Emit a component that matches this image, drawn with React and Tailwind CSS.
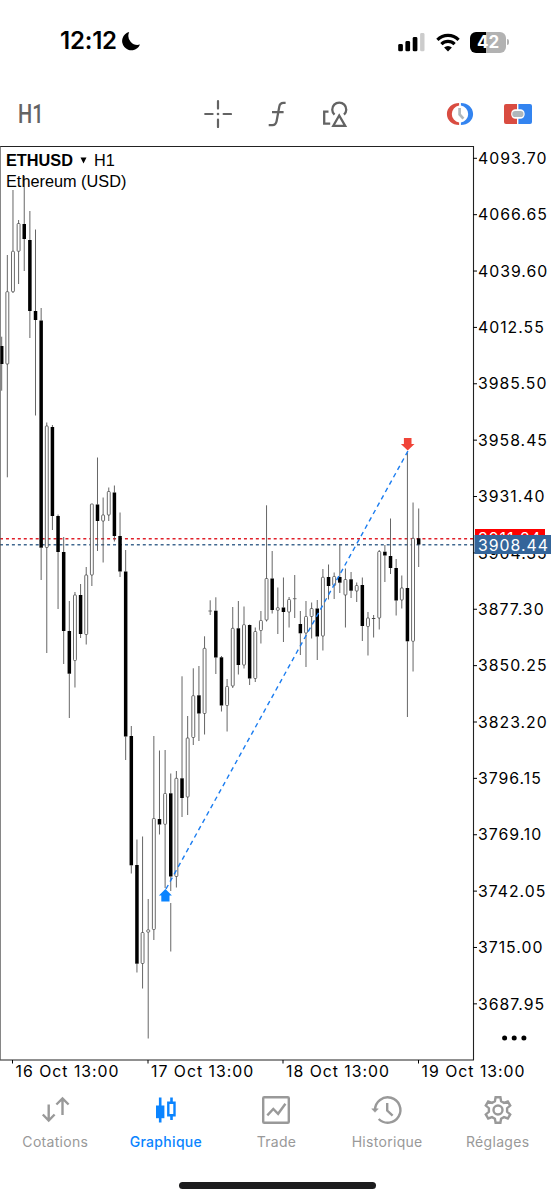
import React from 'react';

// [high, body top, body bottom, low, kind] in chart units, oldest first
// kind: 1 = bearish (filled), 0 = bullish (hollow), 2 = doji
const CANDLES = [
  [336.7, 346, 364, 390.7, 1],
  [255, 291.7, 364, 477.3, 0],
  [190, 251.3, 291.7, 293, 0],
  [220, 223.5, 251.3, 284, 0],
  [176, 224, 239, 271, 1],
  [211, 240, 311, 338, 1],
  [229.5, 311, 320, 415.5, 1],
  [308, 320.5, 547.7, 580, 1],
  [422.5, 426, 547.5, 653, 0],
  [425, 427, 516, 530, 1],
  [514.5, 516, 552, 609, 1],
  [537, 552, 631, 664, 1],
  [601, 631, 673.7, 718, 1],
  [592, 595, 660.5, 687.5, 0],
  [584, 595, 634, 638, 1],
  [567, 575, 634.5, 644.5, 0],
  [504, 504, 575, 586, 0],
  [457.5, 504.5, 521, 551, 1],
  [497.5, 515, 521, 562.5, 0],
  [487.5, 491.5, 515, 521, 0],
  [485.5, 492.5, 536, 541.5, 1],
  [512.5, 536, 571.5, 577, 1],
  [550, 571.5, 736.5, 760, 1],
  [726, 736, 865.3, 873.5, 1],
  [839.5, 865, 963.7, 972.5, 1],
  [836.5, 932.5, 963.5, 988.5, 0],
  [899, 929.8, 932.2, 1038.5, 0],
  [736, 818.5, 929.5, 940, 0],
  [750.5, 819, 824.5, 834.5, 1],
  [750, 793.5, 824.3, 888, 0],
  [773.5, 793.3, 876.5, 951.5, 1],
  [771, 778.3, 876.5, 887.5, 0],
  [676.3, 778.3, 798, 817, 1],
  [716, 738, 797, 815, 0],
  [668.3, 695.7, 737.5, 745, 0],
  [666, 695.3, 713.5, 741, 1],
  [636.3, 648.3, 713.5, 734.5, 0],
  [600.3, 611, 611, 615, 2],
  [597.3, 610.7, 657.5, 674, 1],
  [656, 657.3, 705.5, 711.5, 1],
  [679, 686.5, 705.5, 731.5, 0],
  [607, 628.3, 686, 688, 0],
  [601, 628.3, 665, 674.5, 1],
  [606.5, 624.7, 665, 668.5, 0],
  [624.5, 625, 678.5, 685, 1],
  [627.5, 631.5, 678.5, 682, 0],
  [611, 620.5, 630.5, 643.5, 0],
  [505.3, 578.5, 620, 621.5, 0],
  [551, 578.5, 610, 613.5, 1],
  [587.5, 607.7, 610.3, 634, 0],
  [577.5, 607.5, 612, 642, 1],
  [597, 599.5, 612, 627.5, 0],
  [575, 598.7, 598.7, 618, 2],
  [611, 624, 633.3, 655, 1],
  [601, 616.5, 633, 667, 0],
  [602.5, 608.5, 616.5, 638.5, 0],
  [600, 608.5, 636.5, 660, 1],
  [569, 577.3, 636, 650.5, 0],
  [564.5, 577, 586, 599.5, 1],
  [572.5, 576.5, 585.5, 599, 0],
  [544.5, 577, 582.7, 593, 1],
  [568.5, 579.5, 595, 627.5, 0],
  [572, 579.3, 590.7, 598, 1],
  [582.5, 585.5, 591, 602, 0],
  [577.5, 585, 626, 641, 1],
  [612, 618, 626.5, 655.5, 0],
  [615, 618, 618.7, 637.5, 1],
  [550, 551.5, 618, 629.5, 0],
  [545, 551.7, 555.5, 582, 1],
  [518.5, 556, 568, 574, 1],
  [559, 568, 600.5, 615.5, 1],
  [575.5, 588, 600, 608.5, 0],
  [453, 588, 641.3, 717, 1],
  [502.5, 538.3, 641.3, 671.5, 0],
  [508.5, 538.3, 544.5, 567, 1],
];

const PRICES = Array.from({ length: 16 }, (_, i) => (4093.7 - 27.05 * i).toFixed(2));

const DATES = [
  { x: 12.5, label: '16 Oct 13:00' },
  { x: 148, label: '17 Oct 13:00' },
  { x: 283, label: '18 Oct 13:00' },
  { x: 418.5, label: '19 Oct 13:00' },
];

function Candle({ index, data }) {
  const [high, top, bottom, low, kind] = data;
  const x = 1.7 + index * 5.635;

  return (
    <g>
      <line x1={x} x2={x} y1={high} y2={top} stroke="#555" strokeWidth="0.9" />
      <line x1={x} x2={x} y1={bottom} y2={low} stroke="#555" strokeWidth="0.9" />
      {kind === 1 && (
        <rect x={x - 1.75} y={top} width="3.5" height={bottom - top} fill="#000" />
      )}
      {kind === 0 && (
        <rect
          x={x - 1.45}
          y={top}
          width="2.9"
          height={bottom - top}
          rx="0.8"
          fill="#fff"
          stroke="#444"
          strokeWidth="0.8"
        />
      )}
      {kind === 2 && (
        <line x1={x - 1.8} x2={x + 1.8} y1={top} y2={top} stroke="#555" strokeWidth="0.8" />
      )}
    </g>
  );
}

function StatusBar() {
  return (
    <div className="flex h-[82px] items-center justify-between pl-[60px] pr-[45px]">
      <div className="flex items-center gap-[5px]">
        <span className="text-[24px] font-semibold leading-none tracking-[-0.2px]">12:12</span>
        <svg width="19" height="20" viewBox="0 0 19 20">
          <path d="M7.2 1A9.3 9.3 0 1 0 18 13.6 9.2 9.2 0 0 1 7.2 1Z" fill="#000" />
        </svg>
      </div>
      <div className="flex items-center pt-[2px]">
        <svg width="27" height="19" viewBox="0 0 27 19">
          <rect x="0.2" y="11" width="4.7" height="7.3" rx="1.4" />
          <rect x="7.4" y="8" width="4.7" height="10.3" rx="1.4" />
          <rect x="14.7" y="4" width="4.7" height="14.3" rx="1.4" />
          <rect x="22.1" y="0" width="4.4" height="18.3" rx="1.4" fill="#ccc" />
        </svg>
        <svg className="ml-[11px]" width="24" height="19" viewBox="0 0 24 19" fill="none" stroke="#000">
          <path d="M1.4 6.8a15 15 0 0 1 21.200 0" strokeWidth="3.2" />
          <path d="M5.4 11.2a9.300 9.300 0 0 1 13.200 0" strokeWidth="3.2" />
          <path d="M12 18.6 8.1 14.500a5.600 5.600 0 0 1 7.800 0Z" fill="#000" stroke="none" />
        </svg>
        <div className="ml-[10px] flex h-[21px] w-[36px] items-center justify-center rounded-[6px] bg-linear-to-r from-black from-44% to-[#b2b2b2] to-44% text-[17px] font-bold leading-none text-white">
          42
        </div>
        <div className="ml-[1px] h-[6px] w-[2px] rounded-r-full bg-[#b2b2b2]" />
      </div>
    </div>
  );
}

function Toolbar() {
  return (
    <div className="flex h-16 items-center text-[#636363]">
      <span className="ml-[18px] w-[186px] font-[Roboto] text-[25px] font-medium leading-none">
        <span className="inline-block origin-left scale-x-[0.8]">H1</span>
      </span>
      <svg width="28" height="28" viewBox="0 0 28 28" stroke="currentColor" strokeWidth="2.2" strokeLinecap="round">
        <path d="M14 1.2v7.4M14 19.6V27M1.2 14h7.4M19.6 14H27" />
        <circle cx="14" cy="14" r="1.3" fill="currentColor" stroke="none" />
      </svg>
      <svg className="ml-[36px]" width="18" height="26" viewBox="0 0 18 26" fill="none" stroke="currentColor" strokeWidth="2.3">
        <path d="M17.600 1.900h-2.200c-2.500 0-3.700 1.400-4.100 3.700L8.600 20.100c-.5 2.700-1.800 4-4.200 4H.7M4 11.200h11.600" />
      </svg>
      <svg className="ml-[36px]" width="26" height="28" viewBox="0 0 26 28" fill="none" stroke="currentColor" strokeWidth="2.3">
        <path d="M6.500 11.600H2.200v12h6" />
        <path d="M12.500 14.700A7 7 0 1 1 22 14.700" />
        <path d="M17.200 15.500 11.300 25.800h11.900Z" />
      </svg>
      <svg className="ml-[98px]" width="28" height="24" viewBox="0 0 28 24" fill="none">
        <path d="M13.1 1C6.4 1 .9 5.5.9 12s5.500 11 12.200 11v-2.500a8.600 8.600 0 0 1 0-17Z" fill="#d94c41" />
        <path d="M14.900 1C21.600 1 27.100 5.500 27.100 12s-5.500 11-12.200 11v-2.500a8.600 8.600 0 0 0 0-17Z" fill="#3384f0" />
        <path d="M13.600 6v6.500l3.800 4.200" stroke="#b0b8bc" strokeWidth="2.700" />
      </svg>
      <svg className="ml-[29px]" width="30" height="22" viewBox="0 0 30 22">
        <path d="M3 1h11v20H3a2 2 0 0 1-2-2V3a2 2 0 0 1 2-2Z" fill="#d94c41" />
        <path d="M15.400 1H27a2 2 0 0 1 2 2v16a2 2 0 0 1-2 2H15.400Z" fill="#3384f0" />
        <rect x="8.200" y="6.300" width="13.400" height="9.400" rx="4.200" fill="#fff" />
        <rect x="9.300" y="8" width="11.200" height="6" rx="2.800" fill="#b0b8bc" />
      </svg>
    </div>
  );
}

function Chart() {
  return (
    <div className="relative h-[938px]">
      <svg
        width="554"
        height="938"
        viewBox="0 146 554 938"
        className="block font-[Inter,sans-serif] text-[15.8px] tracking-[1px]"
      >
        {/* Bid and ask lines */}
        <path d="M0 538.700H473" stroke="#e0202a" strokeWidth="1.500" strokeDasharray="3 2.950" />
        <path d="M0 544.800H473" stroke="#41688f" strokeWidth="1.500" strokeDasharray="3 2.950" />

        {CANDLES.map((c, i) => (
          <Candle key={i} index={i} data={c} />
        ))}

        {/* Closed position */}
        <rect x="158" y="891" width="15" height="12" fill="#fff" />
        <path d="M166 889 408 451" stroke="#1a7cf0" strokeWidth="1.400" strokeDasharray="4.600 3.800" />
        <path d="M165.400 889l6.500 6.500h-2.400v6h-8.200v-6h-2.400Z" fill="#0a84ff" />
        <path d="M407.700 450.500l6.800-6.500h-3v-6h-7.600v6h-3Z" fill="#f04438" />

        {/* Frame */}
        <path d="M0 146.500H473.500V1060H0" fill="none" stroke="#222" strokeWidth="1.100" />
        <path d="M0.400 146V1060" stroke="#555" strokeWidth="0.800" />

        {PRICES.map((price, i) => (
          <g key={price}>
            <path d={`M473 ${158.3 + i * 56.37}h4`} stroke="#000" />
            <text x="478" y={164 + i * 56.37}>{price}</text>
          </g>
        ))}
        {DATES.map((d) => (
          <g key={d.label}>
            <path d={`M${d.x} 1060v3.5`} stroke="#000" />
            <text x={d.x + 3} y="1077">{d.label}</text>
          </g>
        ))}

        <rect x="475" y="529" width="70" height="20" fill="#f00" />
        <text x="478" y="544" fill="#fff">3911.24</text>
        <rect x="474.500" y="535" width="76.500" height="19" fill="#34659a" />
        <text x="478" y="550.500" fill="#fff">3908.44</text>

        <g>
          <circle cx="504.600" cy="1038" r="2.500" />
          <circle cx="514.200" cy="1038" r="2.500" />
          <circle cx="523.900" cy="1038" r="2.500" />
        </g>
      </svg>
      <div className="absolute left-[6px] top-[4px] font-['Liberation_Sans',sans-serif] text-[16.3px] leading-[21px]">
        <div className="flex items-center">
          <b>ETHUSD</b>
          <svg className="mx-[7px]" width="7" height="7" viewBox="0 0 7 7">
            <path d="M0.500 0.500h6L3.500 6.500Z" />
          </svg>
          <span>H1</span>
        </div>
        <div>Ethereum (USD)</div>
      </div>
    </div>
  );
}

const TABS = [
  {
    label: 'Cotations',
    icon: <path d="M8.700 9.500v16M2.800 19.500l5.900 6 5.900-6M22.500 20V3.500M16.400 9.500l6.100-6 6.100 6" />,
  },
  {
    label: 'Graphique',
    active: true,
    icon: (
      <>
        <path d="M9.200 2.500v25M20.500 2.500v4.500M20.500 20.500V25" strokeWidth="2.600" />
        <path d="M5 10.500h8.400v12.700H5Z" fill="currentColor" stroke="none" />
        <path d="M17.300 7.800h6.200v12.400h-6.200Z" strokeWidth="2.400" />
      </>
    ),
  },
  {
    label: 'Trade',
    icon: (
      <>
        <rect x="2.200" y="2.200" width="25.600" height="25.600" rx="1" />
        <path d="m6.300 20.300 6-6.300 4.800 4.800 7.300-10" />
      </>
    ),
  },
  {
    label: 'Historique',
    icon: (
      <>
        <path d="M3 15A12.700 12.700 0 1 1 6.700 24" />
        <path d="M-0.300 13.800h6.600L3 17.300Z" fill="currentColor" strokeWidth="0.500" />
        <path d="M15.200 8v7.500l5.400 5.200" />
      </>
    ),
  },
  {
    label: 'Réglages',
    icon: (
      <>
        <path d="M12.600 2.200h4.800l.7 4 2.900 1.700 3.800-1.400 2.400 4.100-3.100 2.600v3.600l3.100 2.600-2.400 4.100-3.800-1.400-2.900 1.700-.7 4h-4.800l-.7-4L9 22.100l-3.800 1.400-2.400-4.100 3.100-2.600v-3.600l-3.100-2.600 2.400-4.100L9 7.900l2.900-1.700Z" />
        <circle cx="15" cy="15" r="4.500" />
      </>
    ),
  },
];

function TabBar() {
  return (
    <nav className="grid w-[553px] grid-cols-5 pt-[11px]">
      {TABS.map((tab) => (
        <div
          key={tab.label}
          className={`flex flex-col items-center ${tab.active ? 'font-medium text-[#0a84ff]' : 'text-[#999]'}`}
        >
          <svg
            className="overflow-visible"
            width="30"
            height="30"
            viewBox="0 0 30 30"
            fill="none"
            stroke="currentColor"
            strokeWidth="2.4"
          >
            {tab.icon}
          </svg>
          <span className="mt-[7px] text-[14px] leading-5 tracking-[0.3px]">{tab.label}</span>
        </div>
      ))}
    </nav>
  );
}

export default function App() {
  return (
    <div className="flex h-[1200px] w-[554px] flex-col overflow-hidden bg-white font-[Inter,sans-serif] text-black">
      <StatusBar />
      <Toolbar />
      <Chart />
      <TabBar />
      <div className="mx-auto mb-[11px] mt-auto h-[7px] w-[197px] rounded-full bg-[#1c1c1e]" />
    </div>
  );
}
